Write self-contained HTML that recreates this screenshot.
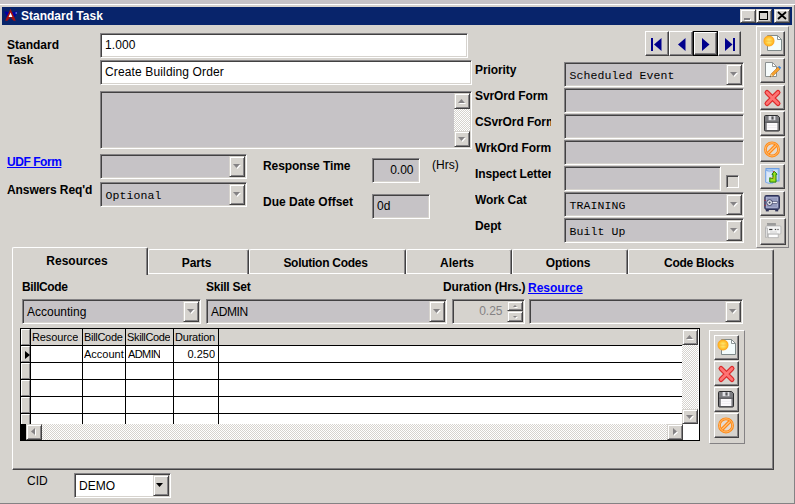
<!DOCTYPE html>
<html><head><meta charset="utf-8"><title>Standard Task</title>
<style>
html,body{margin:0;padding:0;}
body{width:795px;height:504px;overflow:hidden;background:#d6d3ce;position:relative;font-family:"Liberation Sans",sans-serif;font-size:12px;color:#000;}
.a{position:absolute;box-sizing:border-box;}
.sunk{border:1px solid;border-color:#848284 #fff #fff #848284;box-shadow:inset 1px 1px #424142, inset -1px -1px #d6d3ce;}
.rais{border:1px solid;border-color:#fff #424142 #424142 #fff;box-shadow:inset -1px -1px #848284;background:#d6d3ce;}
.rais2{border:1px solid;border-color:#d6d3ce #424142 #424142 #d6d3ce;box-shadow:inset 1px 1px #fff, inset -1px -1px #848284;background:#d6d3ce;}
.b{font-weight:bold;}
.lbl{white-space:nowrap;line-height:14px;font-size:12px;}
.mono{font-family:"Liberation Mono",monospace;font-size:11.5px;letter-spacing:0.1px;white-space:nowrap;line-height:14px;}
.lnk{color:#0000ff;text-decoration:underline;font-weight:bold;}
.hatch{background-image:conic-gradient(#fff 25%,#d6d3ce 0 50%,#fff 0 75%,#d6d3ce 0);background-size:2px 2px;}
.g{font-size:11px;line-height:13px;white-space:nowrap;overflow:hidden;}
svg{position:absolute;overflow:visible;}
</style></head>
<body>
<svg class="a" style="left:0;top:0" width="0" height="0"><defs><radialGradient id="sun" cx="50%" cy="50%" r="50%"><stop offset="0" stop-color="#fff08c"/><stop offset="0.5" stop-color="#ffd042"/><stop offset="0.85" stop-color="#ffaa1c"/><stop offset="1" stop-color="#ff9a10" stop-opacity="0.35"/></radialGradient></defs></svg>
<div class="a " style="left:0px;top:0px;width:795px;height:4px;background:#c6c3c6;"></div>
<div class="a " style="left:0px;top:4px;width:795px;height:1px;background:#fff;"></div>
<div class="a " style="left:794px;top:5px;width:1px;height:499px;background:#848284;"></div>
<div class="a " style="left:0px;top:503px;width:795px;height:1px;background:#848284;"></div>
<div class="a " style="left:2px;top:7px;width:790px;height:18px;background:#08246b;"></div>
<div class="a lbl b" style="left:21px;top:9px;color:#fff;font-size:12px;line-height:14px;">Standard Task</div>
<svg class="a" style="left:4px;top:8px" width="14" height="14" viewBox="0 0 14 14"><polygon points="0.3,3.2 6.5,4.4 3,9" fill="#0000a5"/><polygon points="13.7,3.2 7.5,4.4 11,9" fill="#0000a5"/><path d="M6.5,0.8 L1.2,12.8 L3.4,12.8 L6.5,9.2 L9.6,12.8 L11.8,12.8 Z" fill="#a51010"/><polygon points="6.5,4.6 4.6,9 8.4,9" fill="#fff"/><rect x="11.5" y="4.5" width="1.5" height="1" fill="#9cc7ef"/></svg>
<div class="a rais2" style="left:740px;top:9px;width:16px;height:14px;"></div>
<div class="a " style="left:745px;top:19px;width:6px;height:2px;background:#fff;"></div>
<div class="a " style="left:744px;top:18px;width:6px;height:2px;background:#848284;"></div>
<div class="a rais2" style="left:756px;top:9px;width:16px;height:14px;"></div>
<div class="a " style="left:759px;top:11px;width:9px;height:9px;border:1px solid #000;border-top:2px solid #000;"></div>
<div class="a rais2" style="left:774px;top:9px;width:16px;height:14px;"></div>
<svg class="a" style="left:778px;top:12px" width="8" height="7"><path d="M0,0 L8,7 M8,0 L0,7" stroke="#000" stroke-width="1.8"/></svg>
<div class="a lbl b" style="left:7px;top:38px;">Standard</div>
<div class="a lbl b" style="left:7px;top:53px;">Task</div>
<div class="a sunk" style="left:100px;top:33px;width:368px;height:25px;background:#fff;"></div>
<div class="a lbl" style="left:105px;top:38px;letter-spacing:0.1px;">1.000</div>
<div class="a sunk" style="left:100px;top:60px;width:372px;height:25px;background:#fff;"></div>
<div class="a lbl" style="left:105px;top:65px;letter-spacing:0.14px;">Create Building Order</div>
<div class="a sunk" style="left:100px;top:91px;width:372px;height:58px;background:#c6c3c6;"></div>
<div class="a hatch" style="left:454px;top:93px;width:16px;height:54px;"></div>
<div class="a rais2" style="left:454px;top:93px;width:16px;height:16px;"></div>
<div class="a rais2" style="left:454px;top:131px;width:16px;height:16px;"></div>
<svg class="a" style="left:459px;top:100px" width="7" height="4"><polygon points="0,4 7,4 3.5,0" fill="#fff"/></svg>
<svg class="a" style="left:458px;top:99px" width="7" height="4"><polygon points="0,4 7,4 3.5,0" fill="#848284"/></svg>
<svg class="a" style="left:459px;top:138px" width="7" height="4"><polygon points="0,0 7,0 3.5,4" fill="#fff"/></svg><svg class="a" style="left:458px;top:137px" width="7" height="4"><polygon points="0,0 7,0 3.5,4" fill="#848284"/></svg>
<div class="a lbl lnk" style="left:7px;top:155px;letter-spacing:-0.45px;">UDF Form</div>
<div class="a sunk" style="left:100px;top:154px;width:147px;height:25px;background:#c6c3c6;"></div>
<div class="a rais2" style="left:229px;top:156px;width:16px;height:21px;"></div>
<svg class="a" style="left:234px;top:165px" width="7" height="4"><polygon points="0,0 7,0 3.5,4" fill="#fff"/></svg><svg class="a" style="left:233px;top:164px" width="7" height="4"><polygon points="0,0 7,0 3.5,4" fill="#848284"/></svg>
<div class="a lbl b" style="left:7px;top:183px;letter-spacing:-0.07px;">Answers Req'd</div>
<div class="a sunk" style="left:100px;top:182px;width:147px;height:25px;background:#c6c3c6;"></div>
<div class="a rais2" style="left:229px;top:184px;width:16px;height:21px;"></div>
<svg class="a" style="left:234px;top:193px" width="7" height="4"><polygon points="0,0 7,0 3.5,4" fill="#fff"/></svg><svg class="a" style="left:233px;top:192px" width="7" height="4"><polygon points="0,0 7,0 3.5,4" fill="#848284"/></svg>
<div class="a mono" style="left:105.5px;top:188.5px;">Optional</div>
<div class="a lbl b" style="left:263px;top:159px;letter-spacing:-0.08px;">Response Time</div>
<div class="a sunk" style="left:372px;top:158px;width:48px;height:25px;background:#c6c3c6;"></div>
<div class="a lbl" style="left:372px;top:163px;width:41.5px;text-align:right;">0.00</div>
<div class="a lbl" style="left:432px;top:158px;">(Hrs)</div>
<div class="a lbl b" style="left:263px;top:195px;">Due Date Offset</div>
<div class="a sunk" style="left:372px;top:194px;width:58px;height:25px;background:#c6c3c6;"></div>
<div class="a lbl" style="left:377px;top:198.5px;">0d</div>
<div class="a rais" style="left:645px;top:31px;width:24px;height:25px;"></div>
<div class="a rais" style="left:669px;top:31px;width:24px;height:25px;"></div>
<div class="a " style="left:693px;top:31px;width:25px;height:25px;border:1px solid #000;background:#d6d3ce;"></div>
<div class="a rais" style="left:694px;top:32px;width:23px;height:23px;"></div>
<div class="a rais" style="left:718px;top:31px;width:23px;height:25px;"></div>
<div class="a " style="left:651px;top:38px;width:2px;height:13px;background:#00008c;"></div>
<svg class="a" style="left:653.5px;top:38px" width="8" height="13"><polygon points="7.5,0 7.5,13 0,6.5" fill="#00008c"/></svg>
<svg class="a" style="left:677.5px;top:38px" width="8" height="13"><polygon points="7.5,0 7.5,13 0,6.5" fill="#00008c"/></svg>
<svg class="a" style="left:702px;top:38px" width="8" height="13"><polygon points="0,0 0,13 7.5,6.5" fill="#00008c"/></svg>
<svg class="a" style="left:725px;top:38px" width="8" height="13"><polygon points="0,0 0,13 7.5,6.5" fill="#00008c"/></svg>
<div class="a " style="left:733px;top:38px;width:2px;height:13px;background:#00008c;"></div>
<div class="a lbl b" style="left:475px;top:63px;width:76px;overflow:hidden;letter-spacing:-0.1px;">Priority</div>
<div class="a lbl b" style="left:475px;top:89px;width:76px;overflow:hidden;letter-spacing:-0.1px;">SvrOrd Form</div>
<div class="a lbl b" style="left:475px;top:115px;width:76px;overflow:hidden;letter-spacing:-0.1px;">CSvrOrd Form</div>
<div class="a lbl b" style="left:475px;top:141px;width:76px;overflow:hidden;letter-spacing:-0.1px;">WrkOrd Form</div>
<div class="a lbl b" style="left:475px;top:167px;width:76px;overflow:hidden;letter-spacing:-0.1px;">Inspect Letter</div>
<div class="a lbl b" style="left:475px;top:193px;width:76px;overflow:hidden;letter-spacing:-0.1px;">Work Cat</div>
<div class="a lbl b" style="left:475px;top:219px;width:76px;overflow:hidden;letter-spacing:-0.1px;">Dept</div>
<div class="a sunk" style="left:564px;top:62px;width:180px;height:25px;background:#c6c3c6;"></div>
<div class="a rais2" style="left:726px;top:64px;width:16px;height:21px;"></div>
<svg class="a" style="left:731px;top:73px" width="7" height="4"><polygon points="0,0 7,0 3.5,4" fill="#fff"/></svg><svg class="a" style="left:730px;top:72px" width="7" height="4"><polygon points="0,0 7,0 3.5,4" fill="#848284"/></svg>
<div class="a mono" style="left:569.5px;top:68.5px;">Scheduled Event</div>
<div class="a sunk" style="left:564px;top:88px;width:180px;height:25px;background:#c6c3c6;"></div>
<div class="a sunk" style="left:564px;top:114px;width:180px;height:25px;background:#c6c3c6;"></div>
<div class="a sunk" style="left:564px;top:140px;width:180px;height:25px;background:#c6c3c6;"></div>
<div class="a sunk" style="left:564px;top:166px;width:157px;height:25px;background:#c6c3c6;"></div>
<div class="a sunk" style="left:726px;top:175px;width:13px;height:13px;background:#d6d3ce;"></div>
<div class="a sunk" style="left:564px;top:192px;width:180px;height:25px;background:#c6c3c6;"></div>
<div class="a rais2" style="left:726px;top:194px;width:16px;height:21px;"></div>
<svg class="a" style="left:731px;top:203px" width="7" height="4"><polygon points="0,0 7,0 3.5,4" fill="#fff"/></svg><svg class="a" style="left:730px;top:202px" width="7" height="4"><polygon points="0,0 7,0 3.5,4" fill="#848284"/></svg>
<div class="a mono" style="left:569.5px;top:198.5px;">TRAINING</div>
<div class="a sunk" style="left:564px;top:218px;width:180px;height:25px;background:#c6c3c6;"></div>
<div class="a rais2" style="left:726px;top:220px;width:16px;height:21px;"></div>
<svg class="a" style="left:731px;top:229px" width="7" height="4"><polygon points="0,0 7,0 3.5,4" fill="#fff"/></svg><svg class="a" style="left:730px;top:228px" width="7" height="4"><polygon points="0,0 7,0 3.5,4" fill="#848284"/></svg>
<div class="a mono" style="left:569.5px;top:224.5px;">Built Up</div>
<div class="a " style="left:756px;top:26px;width:33px;height:222px;border:1px solid;border-color:#fff #848284 #848284 #fff;"></div>
<div class="a rais" style="left:760px;top:31px;width:25px;height:25px;"></div>
<svg class="a" style="left:762px;top:34px" width="21" height="18" viewBox="0 0 21 18"><path d="M5.5,1.5 L15.5,1.5 L19.5,5.5 L19.5,16.5 L5.5,16.5 Z" fill="#f4fcfc" stroke="#7f8a8a" stroke-width="1"/><path d="M15.5,1.5 L15.5,5.5 L19.5,5.5 Z" fill="#fff" stroke="#7f8a8a" stroke-width="0.9"/><circle cx="7" cy="7" r="5.8" fill="url(#sun)"/><rect x="3.4" y="6.5" width="7.2" height="1.2" fill="#fbb02a" opacity="0.7"/></svg>
<div class="a rais" style="left:760px;top:58px;width:25px;height:25px;"></div>
<svg class="a" style="left:764px;top:61px" width="18" height="18" viewBox="0 0 18 18"><path d="M1.5,1.5 L8.5,1.5 L12.5,5.5 L12.5,15.5 L1.5,15.5 Z" fill="#f6fcfc" stroke="#8a9090" stroke-width="1"/><path d="M8.5,1.5 L8.5,5.5 L12.5,5.5 Z" fill="#fff" stroke="#8a9090" stroke-width="0.9"/><path d="M6,16 L7,13 L14,6 L16,8 L9,15 Z" fill="#f6a22e" stroke="#b06410" stroke-width="0.5"/><path d="M14,6 L15.2,4.8 L17.2,6.8 L16,8 Z" fill="#3a84e0"/><path d="M6,16 L7,13 L9,15 Z" fill="#ead8ac"/><path d="M6,16 L6.4,14.7 L7.3,15.6 Z" fill="#333"/></svg>
<div class="a rais" style="left:760px;top:85px;width:25px;height:25px;"></div>
<svg class="a" style="left:764px;top:89px" width="17" height="17" viewBox="0 0 17 17"><path d="M3,3.5 L14,14.5 M14,3.5 L3,14.5" stroke="#dc2a2a" stroke-width="5" stroke-linecap="round"/><path d="M3,3.5 L14,14.5 M14,3.5 L3,14.5" stroke="#ff7474" stroke-width="2.6" stroke-linecap="round"/></svg>
<div class="a rais" style="left:760px;top:111px;width:25px;height:25px;"></div>
<svg class="a" style="left:764px;top:115px" width="17" height="17" viewBox="0 0 17 17"><path d="M1.6,0.5 L13.6,0.5 L15.5,2.4 L15.5,14.9 Q15.5,16 14.4,16 L1.6,16 Q0.5,16 0.5,14.9 L0.5,1.6 Q0.5,0.5 1.6,0.5 Z" fill="#7c7c80" stroke="#2c2c2e" stroke-width="1"/><rect x="4.6" y="1" width="6.8" height="4.2" fill="#e2e2e6"/><rect x="7.4" y="1.4" width="2.2" height="3.2" fill="#56565a"/><path d="M1,7.2 L15,7.2" stroke="#4a4a4e" stroke-width="0.8"/><rect x="2.8" y="8" width="10.6" height="7" fill="#fcfafc"/><path d="M3.6,10.3 L12.6,10.3 M3.6,12.6 L12.6,12.6" stroke="#e6e2e8" stroke-width="0.6"/></svg>
<div class="a rais" style="left:760px;top:137px;width:25px;height:25px;"></div>
<svg class="a" style="left:764px;top:140px" width="17" height="17" viewBox="0 0 17 17"><circle cx="8" cy="9.4" r="6.6" fill="#e4dad0" stroke="#ff8a14" stroke-width="2.8"/><path d="M3.4,14 L12.6,4.8" stroke="#ff8a14" stroke-width="3.6"/><circle cx="8" cy="9.4" r="6.6" fill="none" stroke="#ffc88c" stroke-width="0.8"/><path d="M4.2,13.2 L11.8,5.6" stroke="#ffc88c" stroke-width="1.1"/></svg>
<div class="a rais" style="left:760px;top:164px;width:25px;height:25px;"></div>
<svg class="a" style="left:764px;top:167px" width="16" height="18" viewBox="0 0 16 18"><rect x="2" y="1.5" width="13" height="12.5" fill="#a6c8f2" stroke="#6c9ee2" stroke-width="1"/><rect x="4" y="3" width="9.5" height="9.5" fill="#d6e6f8" opacity="0.8"/><path d="M1.5,3.2 Q5,4.6 9,3.6 L9,16.2 Q5,17.2 1.5,15.2 Z" fill="#c2d8f4" stroke="#7aa8e6" stroke-width="0.9"/><path d="M3,5 Q5,5.8 7.6,5.2 L7.6,14.6 Q5,15.4 3,14.2 Z" fill="#e4eefa" opacity="0.8"/><path transform="translate(0,0.9)" d="M5.8,14.2 L5.8,9.8 L7.2,10.6 L9,10.6 L9,6.4 L7.9,6.4 L10.5,3.6 L13,6.4 L12,6.4 L12,14.2 Z" fill="#9ee020" stroke="#1e8206" stroke-width="1"/><path d="M6.6,10.9 L11.4,10.9" stroke="#e0a020" stroke-width="0.7"/><circle cx="9.6" cy="4.6" r="0.7" fill="#c83020"/></svg>
<div class="a rais" style="left:760px;top:191px;width:25px;height:25px;"></div>
<svg class="a" style="left:764px;top:195px" width="16" height="17" viewBox="0 0 16 17"><rect x="0.8" y="0.6" width="14.6" height="13.8" rx="1.8" fill="#6a7098" stroke="#2e3258" stroke-width="1.1"/><rect x="2.6" y="2.6" width="11" height="9.8" fill="#949abe" stroke="#b8bcdc" stroke-width="0.7"/><circle cx="5.6" cy="7.6" r="2.9" fill="#eceef6" stroke="#34385c" stroke-width="0.9"/><circle cx="5.6" cy="7.6" r="1.1" fill="#44485e"/><rect x="8.2" y="6.6" width="5" height="1.7" fill="#f0f0f8" stroke="#34385c" stroke-width="0.5"/><rect x="0.6" y="4.8" width="1.1" height="1" fill="#d42020"/><rect x="0.6" y="9.8" width="1.1" height="1" fill="#d42020"/><rect x="1.8" y="14.6" width="3" height="1.8" fill="#2e3258"/><rect x="11.2" y="14.6" width="3" height="1.8" fill="#2e3258"/></svg>
<div class="a rais" style="left:760px;top:218px;width:26px;height:27px;"></div>
<svg class="a" style="left:765px;top:223px" width="17" height="16" viewBox="0 0 17 16"><rect x="2.6" y="0.3" width="8" height="2.6" fill="#9c9c9c" stroke="#8a8a8a" stroke-width="0.5"/><rect x="0.9" y="2.9" width="15" height="8.2" rx="1" fill="#f6f6f6" stroke="#b2b2b2" stroke-width="0.9"/><rect x="0.6" y="5" width="2" height="9.2" fill="#dedede" stroke="#a6a6a6" stroke-width="0.6"/><rect x="4.2" y="5.9" width="3.2" height="1.2" fill="#2e2e2e"/><rect x="9.8" y="5.9" width="1.4" height="1.2" fill="#4a4a4a"/><rect x="12.4" y="5.9" width="1.2" height="1.2" fill="#4a4a4a"/><rect x="5" y="8.6" width="7" height="0.8" fill="#c8c8c8"/><rect x="3.2" y="11.1" width="10" height="3.6" fill="#fff" stroke="#aeaeae" stroke-width="0.8"/></svg>
<div class="a " style="left:12px;top:273px;width:762px;height:197px;border:1px solid;border-color:#fff #424142 #424142 #fff;box-shadow:inset -1px -1px #848284;"></div>
<div class="a" style="left:148px;top:249px;width:101px;height:25px;border:1px solid;border-color:#fff #424142 transparent #fff;border-bottom:none;border-radius:2px 2px 0 0;box-shadow:inset -1px 0 #848284;"></div>
<div class="a lbl b" style="left:148px;top:256px;width:97px;text-align:center;letter-spacing:-0.1px;">Parts</div>
<div class="a" style="left:249px;top:249px;width:157px;height:25px;border:1px solid;border-color:#fff #424142 transparent #fff;border-bottom:none;border-radius:2px 2px 0 0;box-shadow:inset -1px 0 #848284;"></div>
<div class="a lbl b" style="left:249px;top:256px;width:153px;text-align:center;letter-spacing:-0.27px;">Solution Codes</div>
<div class="a" style="left:406px;top:249px;width:106px;height:25px;border:1px solid;border-color:#fff #424142 transparent #fff;border-bottom:none;border-radius:2px 2px 0 0;box-shadow:inset -1px 0 #848284;"></div>
<div class="a lbl b" style="left:406px;top:256px;width:102px;text-align:center;letter-spacing:0px;">Alerts</div>
<div class="a" style="left:512px;top:249px;width:116px;height:25px;border:1px solid;border-color:#fff #424142 transparent #fff;border-bottom:none;border-radius:2px 2px 0 0;box-shadow:inset -1px 0 #848284;"></div>
<div class="a lbl b" style="left:512px;top:256px;width:112px;text-align:center;letter-spacing:-0.1px;">Options</div>
<div class="a" style="left:628px;top:249px;width:146px;height:25px;border:1px solid;border-color:#fff #424142 transparent #fff;border-bottom:none;border-radius:2px 2px 0 0;box-shadow:inset -1px 0 #848284;"></div>
<div class="a lbl b" style="left:628px;top:256px;width:142px;text-align:center;letter-spacing:-0.25px;">Code Blocks</div>
<div class="a" style="left:12px;top:247px;width:136px;height:28px;background:#d6d3ce;border:1px solid;border-color:#fff #424142 transparent #fff;border-bottom:none;border-radius:2px 2px 0 0;box-shadow:inset -1px 0 #848284;"></div>
<div class="a lbl b" style="left:12px;top:254px;width:130px;text-align:center;">Resources</div>
<div class="a lbl b" style="left:22px;top:280px;letter-spacing:-0.4px;">BillCode</div>
<div class="a lbl b" style="left:206px;top:280px;letter-spacing:-0.25px;">Skill Set</div>
<div class="a lbl b" style="left:443px;top:280px;letter-spacing:-0.1px;">Duration (Hrs.)</div>
<div class="a lbl lnk" style="left:528px;top:281px;">Resource</div>
<div class="a sunk" style="left:22px;top:299px;width:179px;height:25px;background:#c6c3c6;"></div>
<div class="a rais2" style="left:183px;top:301px;width:16px;height:21px;"></div>
<svg class="a" style="left:188px;top:310px" width="7" height="4"><polygon points="0,0 7,0 3.5,4" fill="#fff"/></svg><svg class="a" style="left:187px;top:309px" width="7" height="4"><polygon points="0,0 7,0 3.5,4" fill="#848284"/></svg>
<div class="a lbl" style="left:27px;top:305px;">Accounting</div>
<div class="a sunk" style="left:206px;top:299px;width:241px;height:25px;background:#c6c3c6;"></div>
<div class="a rais2" style="left:429px;top:301px;width:16px;height:21px;"></div>
<svg class="a" style="left:434px;top:310px" width="7" height="4"><polygon points="0,0 7,0 3.5,4" fill="#fff"/></svg><svg class="a" style="left:433px;top:309px" width="7" height="4"><polygon points="0,0 7,0 3.5,4" fill="#848284"/></svg>
<div class="a lbl" style="left:211px;top:305px;"><span style="letter-spacing:-0.35px">ADMIN</span></div>
<div class="a sunk" style="left:452px;top:299px;width:73px;height:25px;background:#d6d3ce;"></div>
<div class="a lbl" style="left:452px;top:304px;width:50.5px;text-align:right;color:#848284;">0.25</div>
<div class="a rais2" style="left:507px;top:301px;width:16px;height:10px;"></div>
<div class="a rais2" style="left:507px;top:311px;width:16px;height:11px;"></div>
<svg class="a" style="left:513.5px;top:305.5px" width="4" height="2"><polygon points="0,2 4,2 2,0" fill="#fff"/></svg>
<svg class="a" style="left:512.5px;top:304.5px" width="4" height="2"><polygon points="0,2 4,2 2,0" fill="#848284"/></svg>
<svg class="a" style="left:513.5px;top:316.5px" width="4" height="2"><polygon points="0,0 4,0 2,2" fill="#fff"/></svg>
<svg class="a" style="left:512.5px;top:315.5px" width="4" height="2"><polygon points="0,0 4,0 2,2" fill="#848284"/></svg>
<div class="a sunk" style="left:529px;top:299px;width:214px;height:25px;background:#c6c3c6;"></div>
<div class="a rais2" style="left:725px;top:301px;width:16px;height:21px;"></div>
<svg class="a" style="left:730px;top:310px" width="7" height="4"><polygon points="0,0 7,0 3.5,4" fill="#fff"/></svg><svg class="a" style="left:729px;top:309px" width="7" height="4"><polygon points="0,0 7,0 3.5,4" fill="#848284"/></svg>
<div class="a " style="left:20px;top:328px;width:680px;height:113px;background:#fff;border:1px solid #000;"></div>
<div class="a " style="left:21px;top:329px;width:662px;height:16px;background:#d6d3ce;"></div>
<div class="a " style="left:21px;top:345px;width:662px;height:1px;background:#000;"></div>
<div class="a " style="left:21px;top:362px;width:662px;height:1px;background:#000;"></div>
<div class="a " style="left:21px;top:379px;width:662px;height:1px;background:#000;"></div>
<div class="a " style="left:21px;top:396px;width:662px;height:1px;background:#000;"></div>
<div class="a " style="left:21px;top:413px;width:662px;height:1px;background:#000;"></div>
<div class="a " style="left:21px;top:329px;width:9px;height:96px;background:#d6d3ce;"></div>
<div class="a " style="left:21px;top:329px;width:9px;height:16px;border-left:1px solid #fff;border-top:1px solid #fff;border-right:1px solid #848284;border-bottom:1px solid #848284;"></div>
<div class="a " style="left:21px;top:346px;width:9px;height:16px;border-left:1px solid #fff;border-top:1px solid #fff;border-right:1px solid #848284;border-bottom:1px solid #848284;"></div>
<div class="a " style="left:21px;top:363px;width:9px;height:16px;border-left:1px solid #fff;border-top:1px solid #fff;border-right:1px solid #848284;border-bottom:1px solid #848284;"></div>
<div class="a " style="left:21px;top:380px;width:9px;height:16px;border-left:1px solid #fff;border-top:1px solid #fff;border-right:1px solid #848284;border-bottom:1px solid #848284;"></div>
<div class="a " style="left:21px;top:397px;width:9px;height:16px;border-left:1px solid #fff;border-top:1px solid #fff;border-right:1px solid #848284;border-bottom:1px solid #848284;"></div>
<div class="a " style="left:21px;top:414px;width:9px;height:10px;border-left:1px solid #fff;border-top:1px solid #fff;border-right:1px solid #848284;"></div>
<div class="a " style="left:21px;top:345px;width:9px;height:1px;background:#000;"></div>
<div class="a " style="left:21px;top:362px;width:9px;height:1px;background:#000;"></div>
<div class="a " style="left:21px;top:379px;width:9px;height:1px;background:#000;"></div>
<div class="a " style="left:21px;top:396px;width:9px;height:1px;background:#000;"></div>
<div class="a " style="left:21px;top:413px;width:9px;height:1px;background:#000;"></div>
<div class="a " style="left:30px;top:329px;width:1px;height:96px;background:#000;"></div>
<div class="a " style="left:82px;top:329px;width:1px;height:96px;background:#000;"></div>
<div class="a " style="left:125px;top:329px;width:1px;height:96px;background:#000;"></div>
<div class="a " style="left:173px;top:329px;width:1px;height:96px;background:#000;"></div>
<div class="a " style="left:218px;top:329px;width:1px;height:96px;background:#000;"></div>
<div class="a g" style="left:32px;top:331px;letter-spacing:-0.1px;">Resource</div>
<div class="a g" style="left:84px;top:331px;letter-spacing:-0.3px;">BillCode</div>
<div class="a g" style="left:127px;top:331px;letter-spacing:-0.35px;">SkillCode</div>
<div class="a g" style="left:175px;top:331px;letter-spacing:-0.2px;">Duration</div>
<div class="a g" style="left:84px;top:348px;width:41px;">Account</div>
<div class="a g" style="left:128px;top:348px;letter-spacing:-0.6px;">ADMIN</div>
<div class="a g" style="left:173px;top:348px;width:42px;text-align:right;">0.250</div>
<svg class="a" style="left:24.5px;top:351px" width="5" height="8"><polygon points="0,0 0,8 5,4" fill="#000"/></svg>
<div class="a hatch" style="left:682px;top:329px;width:16px;height:95px;"></div>
<div class="a rais2" style="left:682px;top:329px;width:16px;height:16px;"></div>
<div class="a rais2" style="left:682px;top:409px;width:16px;height:15px;"></div>
<svg class="a" style="left:687px;top:336px" width="7" height="4"><polygon points="0,4 7,4 3.5,0" fill="#fff"/></svg>
<svg class="a" style="left:686px;top:335px" width="7" height="4"><polygon points="0,4 7,4 3.5,0" fill="#848284"/></svg>
<svg class="a" style="left:687px;top:416px" width="7" height="4"><polygon points="0,0 7,0 3.5,4" fill="#fff"/></svg><svg class="a" style="left:686px;top:415px" width="7" height="4"><polygon points="0,0 7,0 3.5,4" fill="#848284"/></svg>
<div class="a " style="left:21px;top:424px;width:5px;height:16px;background:#000;"></div>
<div class="a hatch" style="left:26px;top:424px;width:657px;height:16px;"></div>
<div class="a rais2" style="left:26px;top:424px;width:16px;height:16px;"></div>
<div class="a rais2" style="left:667px;top:424px;width:16px;height:16px;"></div>
<svg class="a" style="left:32px;top:429px" width="4" height="7"><polygon points="4,0 4,7 0,3.5" fill="#fff"/></svg>
<svg class="a" style="left:31px;top:428px" width="4" height="7"><polygon points="4,0 4,7 0,3.5" fill="#848284"/></svg>
<svg class="a" style="left:674px;top:429px" width="4" height="7"><polygon points="0,0 0,7 4,3.5" fill="#fff"/></svg>
<svg class="a" style="left:673px;top:428px" width="4" height="7"><polygon points="0,0 0,7 4,3.5" fill="#848284"/></svg>
<div class="a " style="left:683px;top:424px;width:16px;height:16px;background:#fff;"></div>
<div class="a " style="left:709px;top:330px;width:36px;height:114px;border:1px solid;border-color:#fff #848284 #848284 #fff;"></div>
<div class="a rais" style="left:714px;top:335px;width:25px;height:25px;"></div>
<svg class="a" style="left:716px;top:338px" width="21" height="18" viewBox="0 0 21 18"><path d="M5.5,1.5 L15.5,1.5 L19.5,5.5 L19.5,16.5 L5.5,16.5 Z" fill="#f4fcfc" stroke="#7f8a8a" stroke-width="1"/><path d="M15.5,1.5 L15.5,5.5 L19.5,5.5 Z" fill="#fff" stroke="#7f8a8a" stroke-width="0.9"/><circle cx="7" cy="7" r="5.8" fill="url(#sun)"/><rect x="3.4" y="6.5" width="7.2" height="1.2" fill="#fbb02a" opacity="0.7"/></svg>
<div class="a rais" style="left:714px;top:361px;width:25px;height:25px;"></div>
<svg class="a" style="left:718px;top:365px" width="17" height="17" viewBox="0 0 17 17"><path d="M3,3.5 L14,14.5 M14,3.5 L3,14.5" stroke="#dc2a2a" stroke-width="5" stroke-linecap="round"/><path d="M3,3.5 L14,14.5 M14,3.5 L3,14.5" stroke="#ff7474" stroke-width="2.6" stroke-linecap="round"/></svg>
<div class="a rais" style="left:714px;top:387px;width:25px;height:25px;"></div>
<svg class="a" style="left:718px;top:391px" width="17" height="17" viewBox="0 0 17 17"><path d="M1.6,0.5 L13.6,0.5 L15.5,2.4 L15.5,14.9 Q15.5,16 14.4,16 L1.6,16 Q0.5,16 0.5,14.9 L0.5,1.6 Q0.5,0.5 1.6,0.5 Z" fill="#7c7c80" stroke="#2c2c2e" stroke-width="1"/><rect x="4.6" y="1" width="6.8" height="4.2" fill="#e2e2e6"/><rect x="7.4" y="1.4" width="2.2" height="3.2" fill="#56565a"/><path d="M1,7.2 L15,7.2" stroke="#4a4a4e" stroke-width="0.8"/><rect x="2.8" y="8" width="10.6" height="7" fill="#fcfafc"/><path d="M3.6,10.3 L12.6,10.3 M3.6,12.6 L12.6,12.6" stroke="#e6e2e8" stroke-width="0.6"/></svg>
<div class="a rais" style="left:714px;top:413px;width:25px;height:25px;"></div>
<svg class="a" style="left:718px;top:416px" width="17" height="17" viewBox="0 0 17 17"><circle cx="8" cy="9.4" r="6.6" fill="#e4dad0" stroke="#ff8a14" stroke-width="2.8"/><path d="M3.4,14 L12.6,4.8" stroke="#ff8a14" stroke-width="3.6"/><circle cx="8" cy="9.4" r="6.6" fill="none" stroke="#ffc88c" stroke-width="0.8"/><path d="M4.2,13.2 L11.8,5.6" stroke="#ffc88c" stroke-width="1.1"/></svg>
<div class="a lbl" style="left:27px;top:474px;">CID</div>
<div class="a sunk" style="left:74px;top:473px;width:97px;height:25px;background:#fff;"></div>
<div class="a rais2" style="left:153px;top:475px;width:16px;height:21px;"></div>
<svg class="a" style="left:156px;top:483px" width="7" height="4"><polygon points="0,0 7,0 3.5,4" fill="#000"/></svg>
<div class="a lbl" style="left:79px;top:479px;">DEMO</div>
</body></html>
